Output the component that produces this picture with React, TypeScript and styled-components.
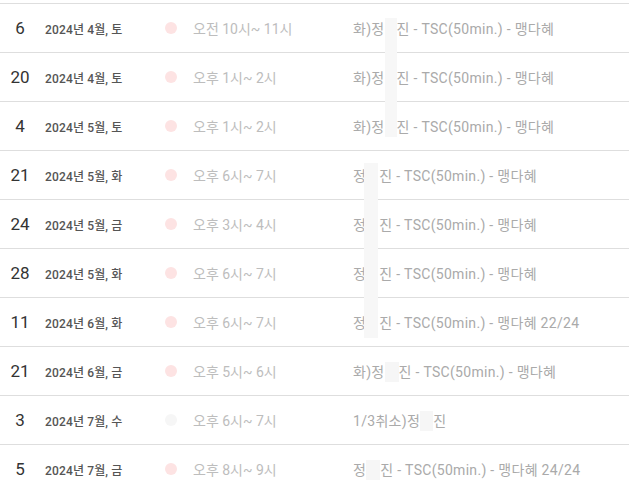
import React from "react";
import styled, { createGlobalStyle } from "styled-components";

const Global = createGlobalStyle`
  html, body { margin: 0; padding: 0; background: #fff; }
  body { font-family: Roboto, "Noto Sans CJK KR", sans-serif; overflow: hidden; }
`;

const List = styled.div`
  position: relative;
  width: 629px;
  padding-top: 3px;
`;

const Row = styled.div`
  display: grid;
  grid-template-columns: 40px 125px 28px 160px 1fr;
  align-items: center;
  height: 48px;
  border-top: 1px solid #dedede;
`;

const Day = styled.div`
  text-align: center;
  font-size: 17px;
  color: #333;
`;

const DateText = styled.div`
  padding-left: 5px;
  font-size: 12px;
  font-weight: 500;
  letter-spacing: 0.15px;
  color: #555;
`;

const Dot = styled.span<{ $muted?: boolean }>`
  display: block;
  width: 12px;
  height: 12px;
  border-radius: 50%;
  background: ${(p) => (p.$muted ? "#f6f6f6" : "#fde3e3")};
`;

const Time = styled.div`
  font-size: 14px;
  color: #bdbdbd;
  white-space: nowrap;
`;

const Desc = styled.div`
  font-size: 14px;
  letter-spacing: 0.3px;
  color: #aaa;
  white-space: nowrap;
`;

const Gap = styled.span<{ $w: number; $fill?: boolean }>`
  display: inline-block;
  width: ${(p) => p.$w}px;
  height: 20px;
  vertical-align: -5px;
  background: ${(p) => (p.$fill ? "#f6f6f6" : "transparent")};
`;

const Mask = styled.div`
  position: absolute;
  background: #f7f7f7;
`;

type Item = {
  day: string;
  date: string;
  time: string;
  pre: string;
  gap: number;
  fill?: boolean;
  post: string;
  muted?: boolean;
};

const items: Item[] = [
  { day: "6", date: "2024년 4월, 토", time: "오전 10시~ 11시", pre: "화)정", gap: 12, post: "진 - TSC(50min.) - 맹다혜" },
  { day: "20", date: "2024년 4월, 토", time: "오후 1시~ 2시", pre: "화)정", gap: 12, post: "진 - TSC(50min.) - 맹다혜" },
  { day: "4", date: "2024년 5월, 토", time: "오후 1시~ 2시", pre: "화)정", gap: 12, post: "진 - TSC(50min.) - 맹다혜" },
  { day: "21", date: "2024년 5월, 화", time: "오후 6시~ 7시", pre: "정", gap: 13, post: "진 - TSC(50min.) - 맹다혜" },
  { day: "24", date: "2024년 5월, 금", time: "오후 3시~ 4시", pre: "정", gap: 13, post: "진 - TSC(50min.) - 맹다혜" },
  { day: "28", date: "2024년 5월, 화", time: "오후 6시~ 7시", pre: "정", gap: 13, post: "진 - TSC(50min.) - 맹다혜" },
  { day: "11", date: "2024년 6월, 화", time: "오후 6시~ 7시", pre: "정", gap: 13, post: "진 - TSC(50min.) - 맹다혜 22/24" },
  { day: "21", date: "2024년 6월, 금", time: "오후 5시~ 6시", pre: "화)정", gap: 14, fill: true, post: "진 - TSC(50min.) - 맹다혜" },
  { day: "3", date: "2024년 7월, 수", time: "오후 6시~ 7시", pre: "1/3취소)정", gap: 13, fill: true, post: "진", muted: true },
  { day: "5", date: "2024년 7월, 금", time: "오후 8시~ 9시", pre: "정", gap: 14, fill: true, post: "진 - TSC(50min.) - 맹다혜 24/24" },
];

export default function App() {
  return (
    <>
      <Global />
      <List>
        {items.map((it, i) => (
          <Row key={i}>
            <Day>{it.day}</Day>
            <DateText>{it.date}</DateText>
            <Dot $muted={it.muted} />
            <Time>{it.time}</Time>
            <Desc>
              {it.pre}
              <Gap $w={it.gap} $fill={it.fill} />
              {it.post}
            </Desc>
          </Row>
        ))}
        <Mask style={{ left: 385, top: 18, width: 12, height: 119 }} />
        <Mask style={{ left: 364, top: 163, width: 14, height: 175 }} />
      </List>
    </>
  );
}
